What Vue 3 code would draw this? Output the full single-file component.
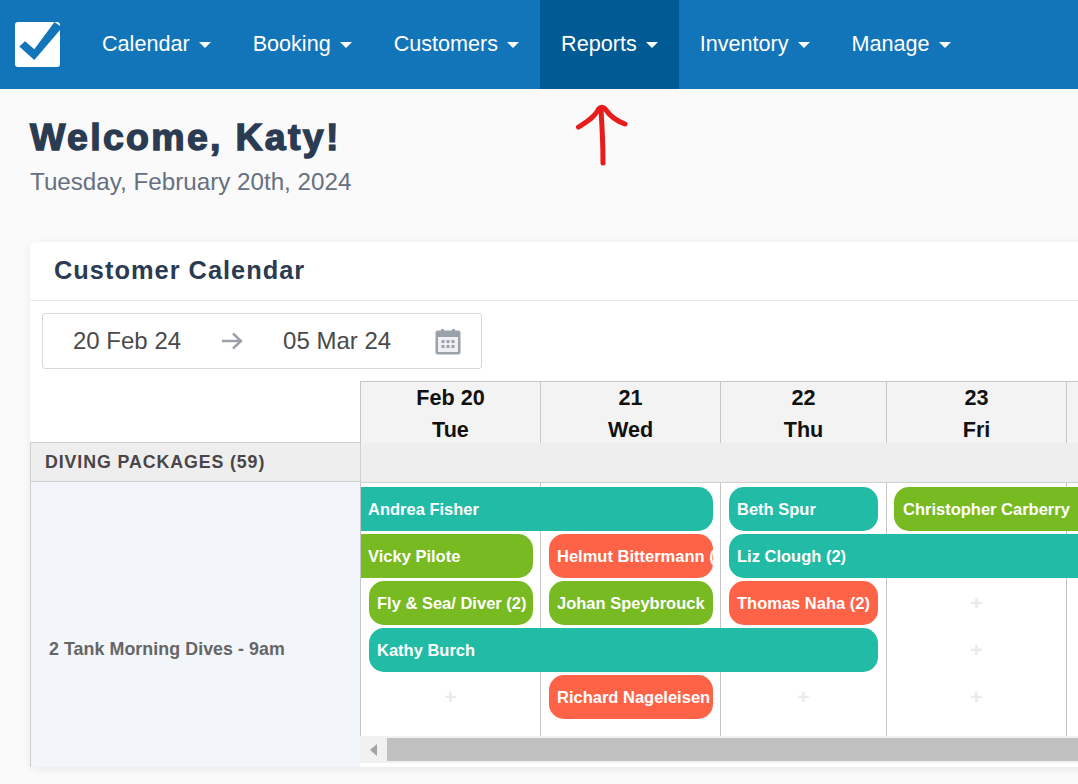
<script setup>
const navItems = [
  { label: 'Calendar', active: false },
  { label: 'Booking', active: false },
  { label: 'Customers', active: false },
  { label: 'Reports', active: true },
  { label: 'Inventory', active: false },
  { label: 'Manage', active: false },
]
const days = [
  { id: 'tue', top: 'Feb 20', bottom: 'Tue' },
  { id: 'wed', top: '21', bottom: 'Wed' },
  { id: 'thu', top: '22', bottom: 'Thu' },
  { id: 'fri', top: '23', bottom: 'Fri' },
  { id: 'sat', top: '', bottom: '' },
]
const bars = [
  { name: 'Andrea Fisher', tone: 'teal', col: '1 / 3', row: 1, cls: 'open-left end' },
  { name: 'Beth Spur', tone: 'teal', col: '3 / 4', row: 1, cls: 'start end-wide' },
  { name: 'Christopher Carberry', tone: 'green', col: '4 / 6', row: 1, cls: 'start-narrow end' },
  { name: 'Vicky Pilote', tone: 'green', col: '1 / 2', row: 2, cls: 'open-left end' },
  { name: 'Helmut Bittermann (2)', tone: 'red', col: '2 / 3', row: 2, cls: 'start end' },
  { name: 'Liz Clough (2)', tone: 'teal', col: '3 / 6', row: 2, cls: 'start end' },
  { name: 'Fly & Sea/ Diver (2)', tone: 'green', col: '1 / 2', row: 3, cls: 'start end' },
  { name: 'Johan Speybrouck', tone: 'green', col: '2 / 3', row: 3, cls: 'start end' },
  { name: 'Thomas Naha (2)', tone: 'red', col: '3 / 4', row: 3, cls: 'start end-wide' },
  { name: 'Kathy Burch', tone: 'teal', col: '1 / 4', row: 4, cls: 'start end-wide' },
  { name: 'Richard Nageleisen', tone: 'red', col: '2 / 3', row: 5, cls: 'start end' },
]
const plusses = [
  { col: 4, row: 3 },
  { col: 4, row: 4 },
  { col: 1, row: 5 },
  { col: 3, row: 5 },
  { col: 4, row: 5 },
]
</script>

<template>
  <div class="page">
    <header class="nav">
      <svg class="logo" width="45" height="45" viewBox="0 0 45 45">
        <rect width="45" height="45" rx="3" fill="#fff" />
        <path d="M4.3 24.5L10 19.3L19.3 27.3L39.5 0L45 4V8L19.3 38Z" fill="#1274b9" />
      </svg>
      <nav class="menu">
        <a v-for="item in navItems" :key="item.label" class="menu-item" :class="{ active: item.active }">
          {{ item.label }}<span class="caret"></span>
        </a>
      </nav>
    </header>

    <svg class="scribble" width="64" height="72" viewBox="0 0 64 72">
      <path d="M8.5 27C16 22 24 18 28 10C29.500 7 33 6 36 10C40 16 47 21 55 24M31 10C32 25 33 45 33 63" fill="none" stroke="#e71c1c" stroke-width="5" stroke-linecap="round" stroke-linejoin="round" />
    </svg>

    <main class="content">
      <h1 class="welcome">Welcome, Katy!</h1>
      <p class="today">Tuesday, February 20th, 2024</p>

      <section class="card">
        <h2 class="card-title">Customer Calendar</h2>
        <div class="card-body">
          <div class="range">
            <span class="range-date">20 Feb 24</span>
            <svg class="range-arrow" width="24" height="20" viewBox="0 0 24 20">
              <path d="M2 10H21M13 2.500L21 10L13 17.500" fill="none" stroke="#9aa1ab" stroke-width="2.400" />
            </svg>
            <span class="range-date second">05 Mar 24</span>
            <svg class="range-cal" width="26" height="27" viewBox="0 0 26 27">
              <path d="M3 2.500H6V1H9V2.500H17V1H20V2.500H23A2.500 2.500 0 0 1 25.500 5V24A2.500 2.500 0 0 1 23 26.500H3A2.500 2.500 0 0 1 .5 24V5A2.500 2.500 0 0 1 3 2.500Z" fill="#9aa1ab" />
              <rect x="3" y="9" width="20" height="15" fill="#eef0f3" />
              <g fill="#9aa1ab">
                <rect x="6.500" y="12" width="3" height="3" /><rect x="11.500" y="12" width="3" height="3" /><rect x="16.500" y="12" width="3" height="3" />
                <rect x="6.500" y="17" width="3" height="3" /><rect x="11.500" y="17" width="3" height="3" /><rect x="16.500" y="17" width="3" height="3" />
              </g>
            </svg>
          </div>
        </div>

        <div class="sheet">
          <aside class="side">
            <div class="side-blank"></div>
            <div class="side-group">DIVING PACKAGES (59)</div>
            <div class="side-row">2 Tank Morning Dives - 9am</div>
          </aside>
          <div class="board">
            <div class="days">
              <div v-for="d in days" :key="d.id" class="day">
                <div class="day-line">{{ d.top }}</div>
                <div class="day-line">{{ d.bottom }}</div>
              </div>
            </div>
            <div class="group-band"></div>
            <div class="slots">
              <div v-for="n in 5" :key="'c' + n" class="slot-col" :style="{ gridColumn: n }"></div>
              <div
                v-for="p in plusses"
                :key="p.col + '-' + p.row"
                class="plus"
                :style="{ gridColumn: p.col, gridRow: p.row }"
              >+</div>
              <div
                v-for="b in bars"
                :key="b.name"
                class="bar"
                :class="[b.tone, b.cls]"
                :style="{ gridColumn: b.col, gridRow: b.row }"
              >{{ b.name }}</div>
            </div>
            <div class="scrollbar">
              <span class="scroll-arrow"></span>
              <span class="scroll-thumb"></span>
            </div>
          </div>
        </div>
      </section>
    </main>
  </div>
</template>

<style>
html, body { overflow: hidden; background: #fafafa; }
</style>

<style scoped>
.page {
  position: relative;
  width: 1078px;
  height: 784px;
  overflow: hidden;
  background: #fafafa;
  font-family: "Liberation Sans", Arial, sans-serif;
}
.nav {
  display: flex;
  align-items: center;
  height: 89px;
  background: #1274b9;
}
.logo { margin-left: 15px; flex: none; }
.menu { display: flex; height: 100%; margin-left: 21px; }
.menu-item {
  display: flex;
  align-items: center;
  padding: 0 21px 1px;
  color: #fff;
  font-size: 21.6px;
  white-space: nowrap;
}
.menu-item.active { background: #005a94; }
.caret {
  margin-left: 9px;
  margin-top: 2px;
  border-left: 6px solid transparent;
  border-right: 6px solid transparent;
  border-top: 6px solid #fff;
}
.scribble { position: absolute; left: 570px; top: 100px; }
.content { padding: 0 0 0 30px; }
.welcome {
  margin: 0;
  padding-top: 29px;
  color: #2a3b52;
  font-size: 37.5px;
  line-height: 38px;
  font-weight: 700;
  letter-spacing: 2.3px;
  -webkit-text-stroke: 1.4px #2a3b52;
}
.today {
  margin: 12px 0 0;
  color: #667080;
  font-size: 24.2px;
  line-height: 28px;
}
.card {
  width: 1100px;
  height: 525px;
  margin-top: 46px;
  background: #fff;
  border-radius: 6px 0 0 6px;
  box-shadow: 0 2px 8px rgba(0, 0, 0, 0.07);
}
.card-title {
  margin: 0;
  height: 58px;
  padding-left: 24px;
  color: #2a3b52;
  font-size: 25.4px;
  line-height: 56px;
  font-weight: 700;
  letter-spacing: 1px;
  border-bottom: 1px solid #e8e8e8;
}
.card-body { padding: 12px; }
.range {
  display: flex;
  align-items: center;
  box-sizing: border-box;
  width: 440px;
  height: 56px;
  padding-left: 30px;
  border: 1px solid #d9d9d9;
  border-radius: 3px;
  color: #4a4a4a;
  font-size: 24px;
}
.range-date { white-space: nowrap; }
.range-arrow { margin-left: 39px; flex: none; }
.range-date.second { margin-left: 39px; }
.range-cal { margin-left: 44px; flex: none; }
.sheet { display: flex; }
.side {
  flex: none;
  display: flex;
  flex-direction: column;
  width: 330px;
}
.side-blank { height: 61px; }
.side-group {
  box-sizing: border-box;
  height: 40px;
  padding-left: 14px;
  background: #eeeeee;
  border: 1px solid #cfcfcf;
  border-right: 0;
  color: #4a4548;
  font-size: 17.8px;
  line-height: 38px;
  font-weight: 700;
  letter-spacing: 0.9px;
}
.side-row {
  box-sizing: border-box;
  height: 285px;
  padding: 155px 0 0 18px;
  background: #f2f5f9;
  border-left: 1px solid #cfcfcf;
  color: #666;
  font-size: 17.8px;
  line-height: 24px;
  font-weight: 700;
  letter-spacing: 0.08px;
}
.board { flex: none; width: 740px; }
.days {
  display: grid;
  grid-template-columns: 180px 180px 166px 180px 180px;
  grid-template-rows: 62px;
}
.day {
  box-sizing: border-box;
  height: 62px;
  background: #f3f3f3;
  border-top: 1px solid #c6c6c6;
  border-left: 1px solid #c6c6c6;
  color: #111;
  font-size: 21.6px;
  font-weight: 700;
  text-align: center;
}
.day-line { height: 32px; line-height: 32px; }
.day-line + .day-line { height: 29px; }
.group-band {
  height: 39px;
  background: #eeeeee;
  border-bottom: 1px solid #cfcfcf;
  border-left: 1px solid #cfcfcf;
}
.slots {
  display: grid;
  grid-template-columns: 180px 180px 166px 180px 180px;
  grid-template-rows: repeat(5, 47px);
  box-sizing: border-box;
  height: 253px;
  padding-top: 4px;
  overflow: hidden;
  background: #fff;
}
.slot-col {
  grid-row: 1 / 6;
  margin-top: -4px;
  margin-bottom: -15px;
  border-left: 1px solid #c6c6c6;
}
.plus {
  align-self: center;
  justify-self: center;
  margin: -3px 0 0 1px;
  color: #eaeaea;
  font-size: 21px;
  line-height: 20px;
  font-weight: 700;
}
.bar {
  display: flex;
  align-items: center;
  height: 44px;
  overflow: hidden;
  padding: 0 0 0 8px;
  color: #fff;
  font-size: 16.5px;
  font-weight: 700;
  white-space: nowrap;
  border-radius: 15px;
}
.bar.start { margin-left: 9px; }
.bar.start-narrow { margin-left: 8px; padding-left: 9px; }
.bar.end { margin-right: 7px; }
.bar.end-wide { margin-right: 8px; }
.bar.open-left { margin-left: 1px; padding-left: 7px; border-radius: 0 15px 15px 0; }
.teal { background: #22bba6; }
.green { background: #78ba22; }
.red { background: #ff6347; }
.scrollbar {
  display: flex;
  align-items: center;
  height: 27px;
  background: #f1f1f1;
}
.scroll-arrow {
  margin-left: 10px;
  border-top: 6px solid transparent;
  border-bottom: 6px solid transparent;
  border-right: 7px solid #a3a3a3;
}
.scroll-thumb {
  flex: 1;
  height: 23px;
  margin-left: 10px;
  background: #c1c1c1;
}
</style>
